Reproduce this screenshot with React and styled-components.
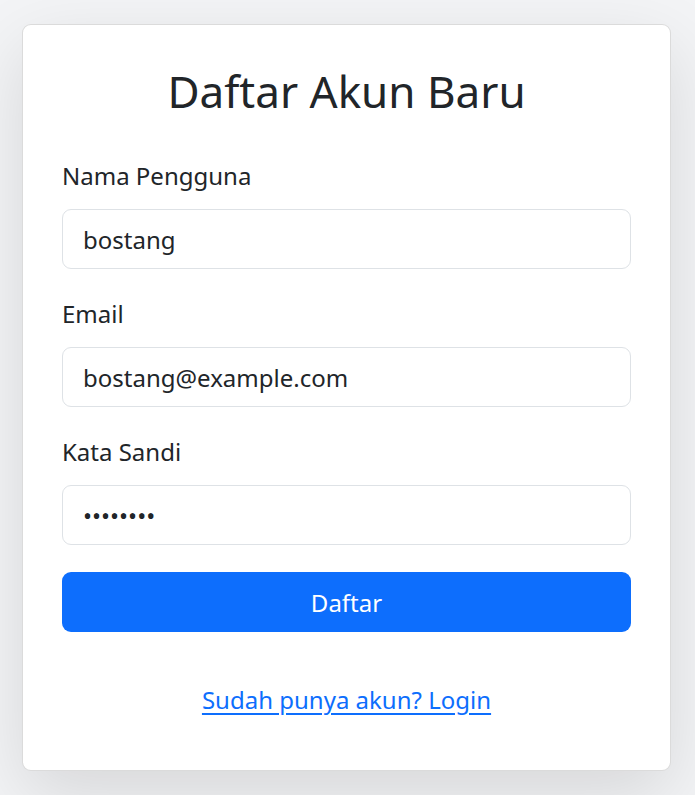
import React from 'react';
import styled, { createGlobalStyle } from 'styled-components';

const GlobalStyle = createGlobalStyle`
  html, body {
    margin: 0;
    padding: 0;
    background: #f3f4f6;
  }
  body {
    font-family: 'Noto Sans', 'Open Sans', sans-serif;
    color: #212529;
  }
`;

const Page = styled.div`
  display: flex;
  justify-content: flex-start;
  padding: 24px 24px 25px 22px;
  min-height: 795px;
  box-sizing: border-box;
`;

const Card = styled.div`
  width: 649px;
  height: 747px;
  box-sizing: border-box;
  background: #fff;
  border: 1px solid rgba(0, 0, 0, 0.14);
  border-radius: 9px;
  box-shadow: 0 24px 72px rgba(0, 0, 0, 0.12);
  padding: 39px 39px 0;
  display: flex;
  flex-direction: column;
`;

const Title = styled.h2`
  margin: 0 0 40px;
  font-size: 44px;
  font-weight: 400;
  line-height: 54px;
  text-align: center;
`;

const Field = styled.div`
  display: flex;
  flex-direction: column;
  margin-bottom: 27px;
`;

const Label = styled.label`
  font-size: 24px;
  line-height: 36px;
  margin-bottom: 15px;
`;

const Input = styled.input`
  height: 60px;
  box-sizing: border-box;
  padding: 0 20px;
  border: 1px solid #dee2e6;
  border-radius: 9px;
  font-family: inherit;
  font-size: 24px;
  color: #212529;
  background: #fff;
  outline: none;
`;

const Button = styled.button`
  height: 60px;
  border: none;
  border-radius: 9px;
  background: #0d6efd;
  color: #fff;
  font-family: inherit;
  font-size: 24px;
  cursor: pointer;
`;

const Footer = styled.div`
  margin-top: 50px;
  text-align: center;
  line-height: 36px;
`;

const LoginLink = styled.a`
  color: #0d6efd;
  font-size: 24px;
  text-decoration: underline;
  text-underline-offset: 4px;
`;

const App = () => (
  <Page>
    <GlobalStyle />
    <Card>
      <Title>Daftar Akun Baru</Title>
      <Field>
        <Label htmlFor="username">Nama Pengguna</Label>
        <Input id="username" type="text" defaultValue="bostang" />
      </Field>
      <Field>
        <Label htmlFor="email">Email</Label>
        <Input id="email" type="email" defaultValue="bostang@example.com" />
      </Field>
      <Field>
        <Label htmlFor="password">Kata Sandi</Label>
        <Input id="password" type="password" defaultValue="password" />
      </Field>
      <Button type="button">Daftar</Button>
      <Footer>
        <LoginLink href="#">Sudah punya akun? Login</LoginLink>
      </Footer>
    </Card>
  </Page>
);

export default App;
